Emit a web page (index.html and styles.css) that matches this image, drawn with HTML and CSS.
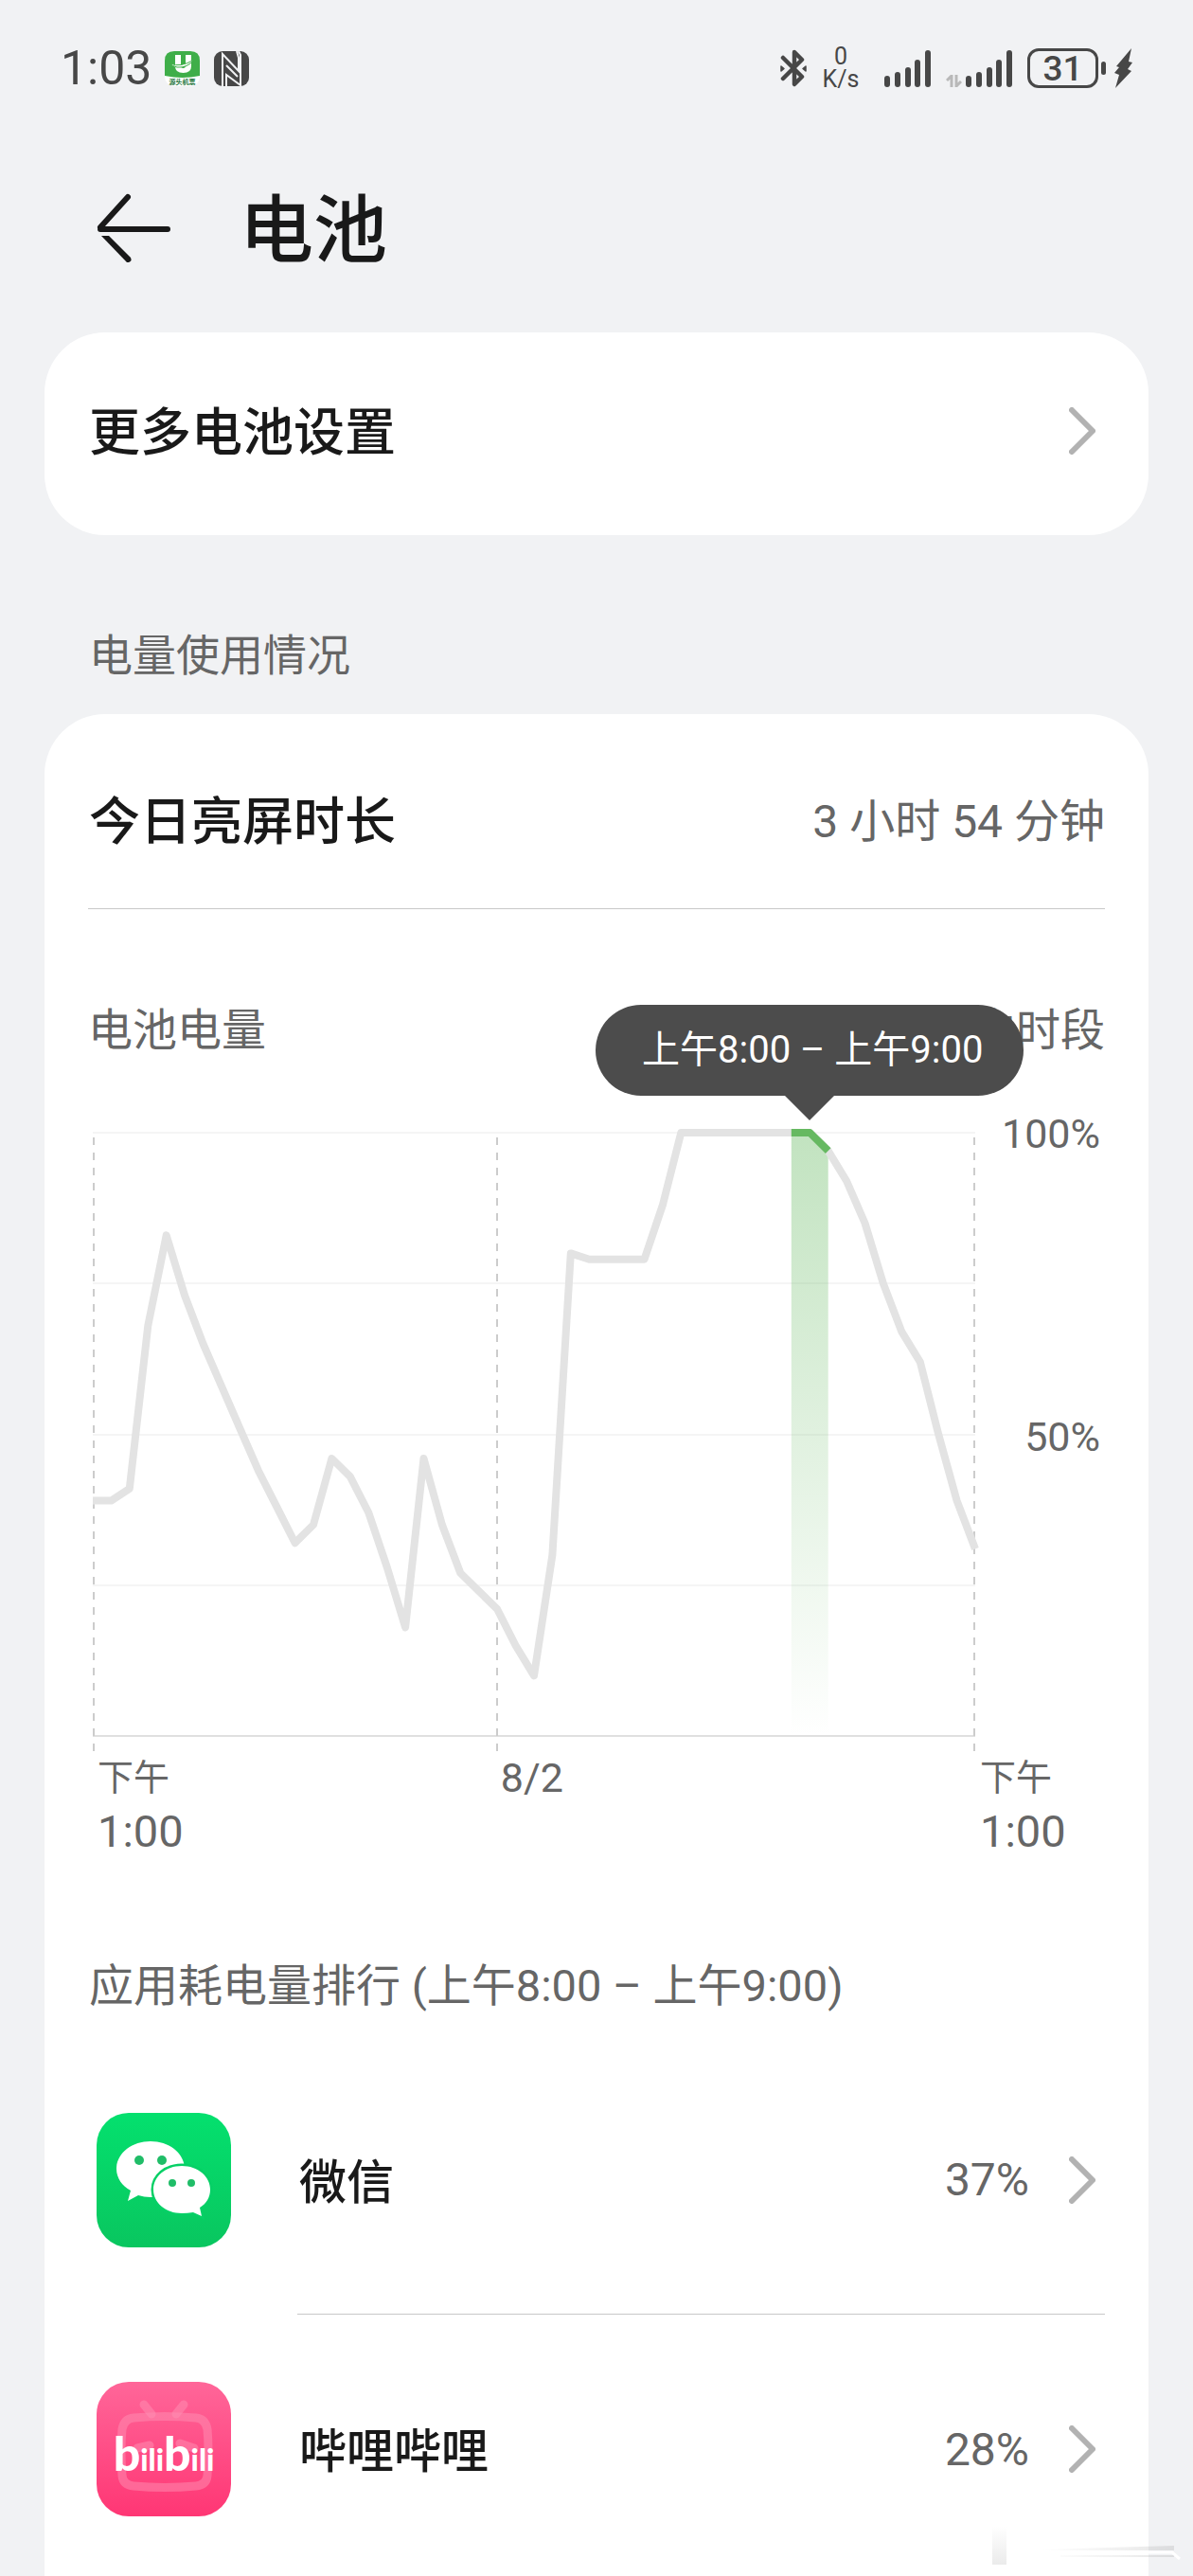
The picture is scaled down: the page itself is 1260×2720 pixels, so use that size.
FILE: index.html
```html
<!DOCTYPE html>
<html lang="zh-CN">
<head>
  <meta charset="UTF-8">
  <meta name="viewport" content="width=device-width, initial-scale=1.0">
  <title>电池</title>
  <link rel="stylesheet" href="styles.css">
</head>
<body>

<div class="statusbar">
  <span class="time">1:03</span>
  <svg class="app-badge" width="37" height="37" viewBox="0 0 37 37">
    <rect width="37" height="37" rx="10" fill="#fff"/>
    <path d="M0 26V10Q0 0 10 0h17q10 0 10 10v16q-18 4-37 0z" fill="#3fae49"/>
    <path d="M11 4h6v11q0 3 2.500 3t2.500-3V4h6v12q0 7-8.500 7T11 16z" fill="#fff"/>
    <path d="M6 13q10 5 25-4-7 9-18 8-5-1-7-4z" fill="#fff" stroke="#3fae49"/>
    <text x="18.500" y="35" text-anchor="middle" font-size="7" font-weight="700" fill="#23753a">源头机票</text>
  </svg>
  <svg class="nfc" width="37" height="37" viewBox="0 0 37 37">
    <rect width="37" height="37" rx="9" fill="#474747"/>
    <path d="M9 37V3L26 21V7L24 0M13 37V25L28 36V4L26 0M13 15l12 12" fill="none" stroke="#f1f2f4" stroke-width="2"/>
  </svg>
  <span class="spacer"></span>
  <svg class="bluetooth" width="28" height="40" viewBox="0 0 28 40" fill="none" stroke="#474747" stroke-width="4.500" stroke-linejoin="round" stroke-linecap="round">
    <path d="M3 9l20 20-8 8V3l8 8L3 31"/>
    <path d="M1 18v5l3-2.500zM27 18v5l-3-2.500z" stroke-width="1.500" fill="#474747"/>
  </svg>
  <span class="speed"><span>0</span><span>K/s</span></span>
  <svg class="signal" width="49" height="39" viewBox="0 0 49 39" stroke="#474747" stroke-width="6" stroke-linecap="round">
    <path d="M3 30v6M14 26v10M25 21v15M35 13v23M46 3v33"/>
  </svg>
  <svg class="data" width="17" height="13" viewBox="0 0 17 13" fill="none" stroke="#b9b9b9" stroke-width="3">
    <path d="M6 13V1L1 6M11 0v12l5-5"/>
  </svg>
  <svg class="signal-2" width="49" height="39" viewBox="0 0 49 39" stroke="#474747" stroke-width="6" stroke-linecap="round">
    <path d="M3 30v6M14 26v10M25 21v15M35 13v23M46 3v33"/>
  </svg>
  <span class="battery">31</span>
  <span class="battery-tip"></span>
  <svg class="bolt" width="19" height="42" viewBox="0 0 19 42">
    <path d="M18 0L2 19l3 1-5 6 5 2-4 14L18 24l-4-2 5-7-4-1z" fill="#474747"/>
  </svg>
</div>

<header class="header">
  <button class="back" aria-label="返回">
    <svg width="78" height="74" viewBox="0 0 78 74" fill="none" stroke="#191919" stroke-width="6" stroke-linecap="round">
      <path d="M33 4L4 36M4 38h71"/>
      <path d="M5 45h8l23 23q2 5-4 5z" fill="#191919" stroke="none"/>
    </svg>
  </button>
  <h1>电池</h1>
</header>

<main>
  <a class="card more" href="#">
    <span class="label">更多电池设置</span>
    <svg class="chevron" width="28" height="50" viewBox="0 0 28 50"><path d="M3 3l22 22L3 47"/></svg>
  </a>

  <h2 class="section-title">电量使用情况</h2>

  <section class="card usage">
    <div class="screen-time">
      <span class="label">今日亮屏时长</span>
      <span class="value">3 小时 54 分钟</span>
    </div>

    <div class="chart-head">
      <span>电池电量</span>
      <span>选中时段</span>
    </div>

    <div class="chart">
      <div class="plot">
        <svg viewBox="0 0 932 658">
          <defs>
            <linearGradient id="fade" x1="0" y1="0" x2="0" y2="1">
              <stop offset="0" stop-color="#66b961" stop-opacity="0.4"/>
              <stop offset="1" stop-color="#66b961" stop-opacity="0"/>
            </linearGradient>
          </defs>
          <g stroke="#f5f5f5" stroke-width="2">
            <path d="M0 4H932M0 163H932M0 323H932M0 482H932"/>
            <path d="M0 641H932" stroke="#e0e0e0"/>
          </g>
          <path d="M1 9V658M427 9V658M931 9V658" stroke="#cccccc" stroke-width="2" stroke-dasharray="8 8"/>
          <path id="hour" fill="url(#fade)"/>
          <path id="level" class="line"/>
          <path id="level-hour" class="line active"/>
        </svg>
        <div class="tooltip">上午8:00 – 上午9:00</div>
      </div>
      <div class="y-axis">
        <span>100%</span>
        <span>50%</span>
      </div>
      <div class="x-axis">
        <span>下午<b>1:00</b></span>
        <span class="date">8/2</span>
      </div>
      <div class="x-end">下午<b>1:00</b></div>
    </div>

    <h3 class="rank-title">应用耗电量排行 (上午8:00 – 上午9:00)</h3>

    <div class="apps">
      <a class="app" href="#">
        <svg class="app-icon" width="142" height="142" viewBox="0 0 142 142">
          <defs>
            <linearGradient id="green" x1="0" y1="0" x2="0" y2="1">
              <stop offset="0" stop-color="#04e06e"/>
              <stop offset="1" stop-color="#09c65f"/>
            </linearGradient>
          </defs>
          <rect width="142" height="142" rx="34" fill="url(#green)"/>
          <path d="M57 30c20 0 36 13 36 29S77 89 57 89q-7 0-13-2l-11 6 3-11C27 77 21 69 21 59c0-16 16-29 36-29z" fill="#fff"/>
          <path d="M90 56c17 0 30 11 30 25 0 8-4 15-11 19l2 9-9-4q-6 1-12 1c-17 0-30-11-30-25s13-25 30-25z" fill="#fff" stroke="#06d066" stroke-width="5" paint-order="stroke"/>
          <g fill="#20bd68">
            <circle cx="45" cy="50" r="5"/><circle cx="69" cy="50" r="5"/>
            <circle cx="80" cy="74" r="4"/><circle cx="100" cy="74" r="4"/>
          </g>
        </svg>
        <span class="app-row">
          <span class="name">微信</span>
          <span class="percent">37%</span>
          <svg class="chevron" width="28" height="50" viewBox="0 0 28 50"><path d="M3 3l22 22L3 47"/></svg>
        </span>
      </a>
      <a class="app" href="#">
        <svg class="app-icon" width="142" height="142" viewBox="0 0 142 142">
          <defs>
            <linearGradient id="pink" x1="0" y1="0" x2="0" y2="1">
              <stop offset="0" stop-color="#ff6699"/>
              <stop offset="1" stop-color="#ff3674"/>
            </linearGradient>
          </defs>
          <rect width="142" height="142" rx="34" fill="url(#pink)"/>
          <g fill="none" stroke="#ff8fb3" stroke-opacity="0.5" stroke-width="9" stroke-linecap="round">
            <path d="M39 38q33-3 66 0 10 1 12 12 2 21 0 49-1 10-12 11-33 3-66 0-11-1-12-11-2-28 0-49 2-11 12-12z"/>
            <path d="M50 24l8 10M92 24l-8 10M43 70l13-3M88 65l15 5"/>
          </g>
          <text class="bili" x="71" y="94" text-anchor="middle"><tspan class="big">b</tspan>ili<tspan class="big">b</tspan>ili</text>
        </svg>
        <span class="app-row">
          <span class="name">哔哩哔哩</span>
          <span class="percent">28%</span>
          <svg class="chevron" width="28" height="50" viewBox="0 0 28 50"><path d="M3 3l22 22L3 47"/></svg>
        </span>
      </a>
    </div>
  </section>
</main>

<svg class="watermark" width="210" height="52" viewBox="0 0 210 52">
  <defs>
    <linearGradient id="streak" x1="0" y1="0" x2="1" y2="0">
      <stop offset="0" stop-color="#999" stop-opacity="0"/>
      <stop offset="1" stop-color="#999" stop-opacity="0.4"/>
    </linearGradient>
    <linearGradient id="bar" x1="0" y1="0" x2="0" y2="1">
      <stop offset="0" stop-color="#ddd" stop-opacity="0"/>
      <stop offset="1" stop-color="#ddd" stop-opacity="0.6"/>
    </linearGradient>
  </defs>
  <rect x="8" y="8" width="15" height="40" fill="url(#bar)"/>
  <path d="M60 32l140-4v5H60zM80 38h120v2H80z" fill="url(#streak)" opacity="0.6"/>
  <path d="M100 35h98l8 7" fill="none" stroke="#fff" stroke-width="3"/>
</svg>

<script>
  // Battery level every half hour, 1 pm to 1 pm
  const levels = [39, 39, 41, 68, 83, 73, 65, 58, 51, 44, 38, 32, 35, 46, 43, 37, 28, 18, 46, 35, 27, 24, 21, 15, 10, 30, 80, 79, 79, 79, 79, 88, 100, 100, 100, 100, 100, 100, 100, 100, 97, 92, 85, 75, 67, 62, 50, 39, 31];
  const points = levels.map((v, i) => `${(i * 932 / 48).toFixed(1)} ${(641 - v * 6.37).toFixed(1)}`);
  const selected = points.slice(38, 41);

  document.getElementById("level").setAttribute("d", "M" + points.join("L"));
  document.getElementById("level-hour").setAttribute("d", "M" + selected.join("L"));
  document.getElementById("hour").setAttribute("d", "M" + selected.join("L") + "V641H737.8Z");
</script>

</body>
</html>
```
FILE: styles.css
```css
* {
  box-sizing: border-box;
}
body {
  margin: 0;
  background-color: #f1f2f4;
  color: #191919;
  font-family: Roboto, "Noto Sans CJK SC", sans-serif;
}
a {
  color: inherit;
  text-decoration: none;
}
h1, h2, h3 {
  margin: 0;
}

/* status bar */
.statusbar {
  display: flex;
  align-items: center;
  height: 144px;
  padding: 0 64px;
  color: #474747;
}
.time {
  width: 110px;
  font-size: 50px;
}
.nfc {
  margin-left: 15px;
}
.spacer {
  flex: 1;
}
.speed {
  display: flex;
  flex-direction: column;
  width: 40px;
  margin: 0 26px 0 16px;
  font-size: 25px;
  line-height: 24px;
  text-align: center;
}
.data {
  align-self: flex-end;
  margin: 0 4px 52px 16px;
}
.battery {
  width: 75px;
  height: 42px;
  margin-left: 16px;
  border: 3px solid #474747;
  border-radius: 12px;
  font-size: 37px;
  font-weight: 500;
  line-height: 38px;
  text-align: center;
}
.battery-tip {
  width: 5px;
  height: 14px;
  margin: 0 9px 0 3px;
  border-radius: 3px;
  background-color: #474747;
}

/* title */
.header {
  display: flex;
  align-items: center;
  height: 207px;
  padding: 0 102px 14px;
}
.back {
  display: flex;
  padding: 0;
  border: none;
  background: none;
}
h1 {
  margin-left: 73px;
  padding-bottom: 8px;
  font-size: 78px;
  font-weight: 500;
}

/* cards */
main {
  padding: 0 47px;
}
.card {
  border-radius: 64px;
  background-color: white;
}
.chevron {
  margin-right: 10px;
  fill: none;
  stroke: #b2b2b2;
  stroke-width: 6px;
  stroke-linecap: round;
  stroke-linejoin: round;
}
.more {
  display: flex;
  align-items: center;
  justify-content: space-between;
  height: 214px;
  padding: 0 46px 6px;
}
.section-title {
  margin: 92px 47px 27px;
  color: #666;
  font-size: 46px;
  font-weight: 400;
  line-height: 70px;
}
.usage {
  border-radius: 64px 64px 0 0;
  padding: 0 46px;
}
.screen-time {
  display: flex;
  align-items: center;
  justify-content: space-between;
  height: 206px;
  padding-top: 20px;
  border-bottom: 1px solid #c8c8c8;
}
.label {
  padding: 0 0 6px 1px;
  font-size: 54px;
  font-weight: 500;
}
.value {
  padding-bottom: 8px;
  color: #666;
  font-size: 48px;
}

/* chart */
.chart-head {
  display: flex;
  justify-content: space-between;
  margin-top: 93px;
  color: #666;
  font-size: 47px;
  line-height: 70px;
}
.chart {
  display: grid;
  grid-template-columns: 1fr 137px;
  margin: 69px 0 98px 5px;
  color: #666;
}
.plot {
  position: relative;
}
.plot svg {
  display: block;
  width: 100%;
  overflow: visible;
}
.line {
  fill: none;
  stroke: #e3e3e3;
  stroke-width: 8px;
  stroke-linejoin: round;
}
.active {
  stroke: #66b961;
}
.tooltip {
  position: absolute;
  left: 57%;
  top: -131px;
  width: 452px;
  padding-left: 6px;
  border-radius: 48px;
  background-color: #4c4c4c;
  color: white;
  font-size: 40px;
  line-height: 96px;
  text-align: center;
}
.tooltip::after {
  content: "";
  position: absolute;
  left: 50%;
  top: 95px;
  margin-left: -27px;
  border: 27px solid transparent;
  border-top-color: #4c4c4c;
  border-bottom: none;
}
.y-axis {
  display: flex;
  flex-direction: column;
  gap: 268px;
  margin-top: -21px;
  padding-right: 5px;
  font-size: 43px;
  line-height: 52px;
  text-align: right;
}
.x-axis {
  display: grid;
  grid-template-columns: 46% 54%;
}
.x-axis span, .x-end {
  padding-left: 5px;
  font-size: 38px;
  line-height: 54px;
}
.x-axis .date {
  padding-left: 2px;
  font-size: 43px;
}
.x-axis b, .x-end b {
  display: block;
  font-size: 47px;
  font-weight: 400;
  line-height: 60px;
}

/* app list */
.rank-title {
  padding-left: 1px;
  color: #666;
  font-size: 47px;
  font-weight: 400;
  line-height: 70px;
}
.apps {
  padding: 28px 0 0 9px;
}
.app {
  display: flex;
  align-items: center;
  gap: 70px;
}
.app-row {
  display: flex;
  flex: 1;
  align-items: center;
  height: 284px;
  border-bottom: 1px solid #c8c8c8;
}
.app:last-child {
  padding-top: 6px;
}
.app:last-child .app-row {
  height: 272px;
  border-bottom: none;
}
.name {
  flex: 1;
  padding: 0 0 4px 2px;
  font-size: 50px;
  font-weight: 500;
}
.percent {
  margin-right: 42px;
  color: #666;
  font-size: 48px;
}
.bili {
  fill: white;
  font-family: Lato, sans-serif;
  font-size: 32px;
  font-weight: 900;
}
.bili .big {
  font-size: 50px;
}

.watermark {
  position: absolute;
  right: 10px;
  top: 2660px;
}
```
